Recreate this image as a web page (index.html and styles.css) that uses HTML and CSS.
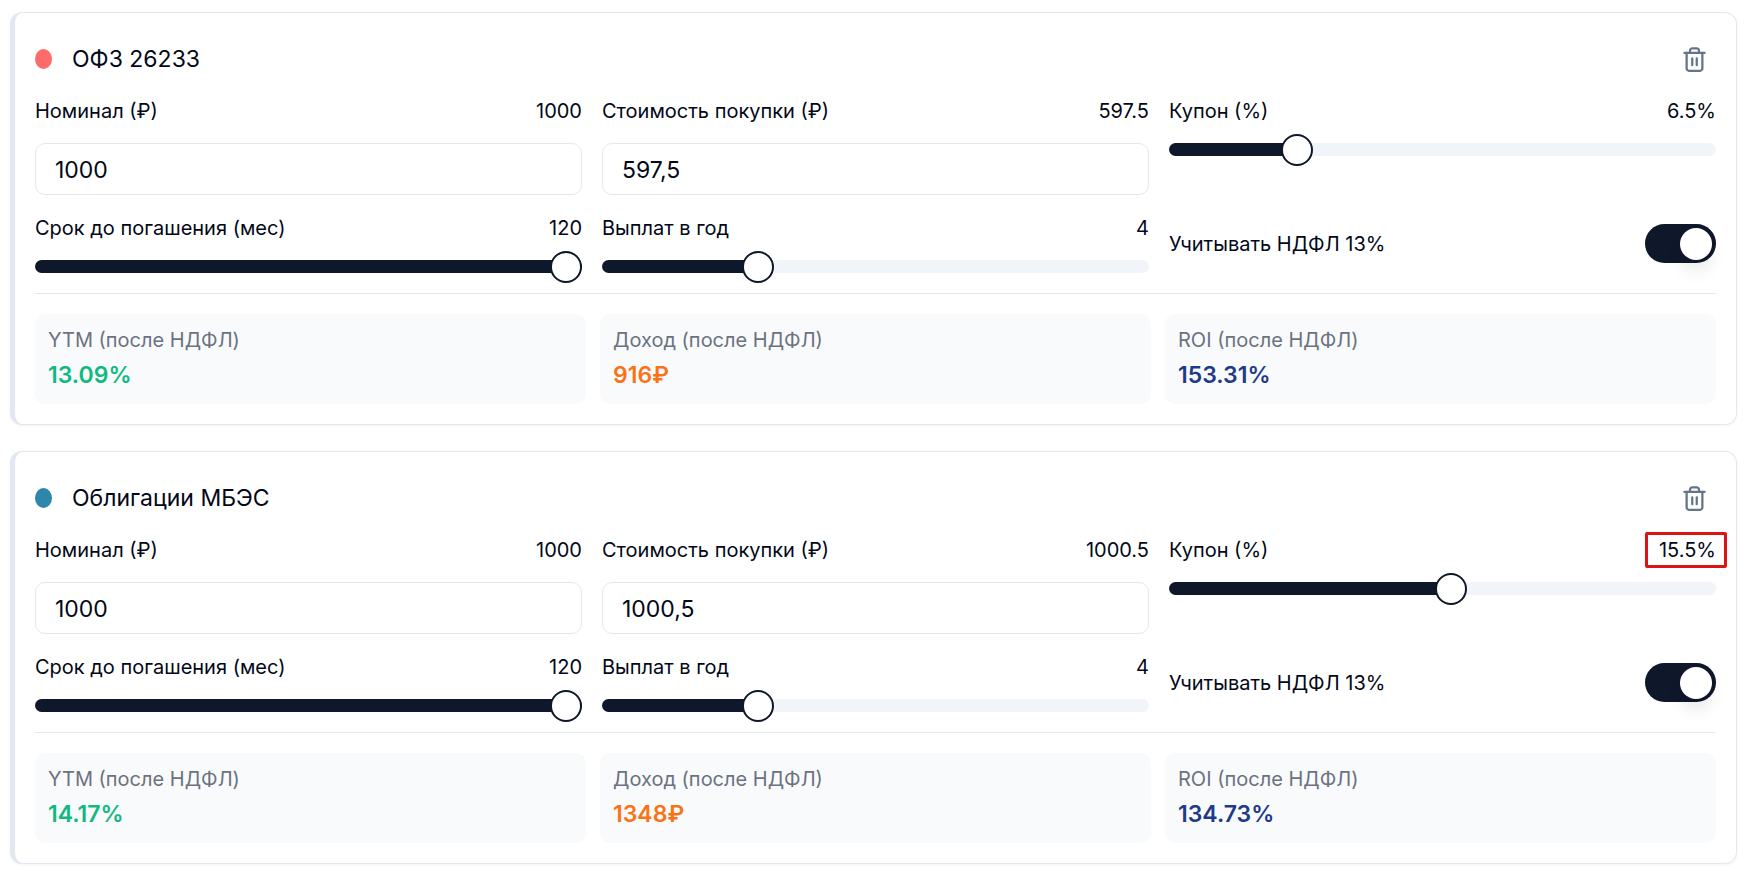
FILE: index.html
```
<!DOCTYPE html>
<html lang="ru">
<head>
  <meta charset="UTF-8">
  <title>Калькулятор облигаций</title>
  <link rel="stylesheet" href="styles.css">
</head>
<body>
  <main class="bonds">
    <section class="card">
      <header class="card-header">
        <span class="dot dot-red"></span>
        <h2>ОФЗ 26233</h2>
        <button type="button" class="delete" aria-label="Удалить">
          <svg viewBox="0 0 24 24" fill="none" stroke="currentColor" stroke-width="2" stroke-linecap="round" stroke-linejoin="round">
            <path d="M3 6h18"/>
            <path d="M19 6v14c0 1-1 2-2 2H7c-1 0-2-1-2-2V6"/>
            <path d="M8 6V4c0-1 1-2 2-2h4c1 0 2 1 2 2v2"/>
            <path d="M10 11v6"/>
            <path d="M14 11v6"/>
          </svg>
        </button>
      </header>

      <div class="fields">
        <div class="field">
          <div class="field-head">
            <label for="nominal1">Номинал (₽)</label>
            <output for="nominal1">1000</output>
          </div>
          <input type="text" inputmode="decimal" id="nominal1" value="1000">
        </div>
        <div class="field">
          <div class="field-head">
            <label for="price1">Стоимость покупки (₽)</label>
            <output for="price1">597.5</output>
          </div>
          <input type="text" inputmode="decimal" id="price1" value="597,5">
        </div>
        <div class="field">
          <div class="field-head">
            <label for="coupon1">Купон (%)</label>
            <output for="coupon1">6.5%</output>
          </div>
          <input type="range" id="coupon1" min="0" max="30" step="0.5" value="6.5" style="--fill: 21.67%">
        </div>
        <div class="field">
          <div class="field-head">
            <label for="term1">Срок до погашения (мес)</label>
            <output for="term1">120</output>
          </div>
          <input type="range" id="term1" min="1" max="120" value="120" style="--fill: 100%">
        </div>
        <div class="field">
          <div class="field-head">
            <label for="freq1">Выплат в год</label>
            <output for="freq1">4</output>
          </div>
          <input type="range" id="freq1" min="1" max="12" value="4" style="--fill: 27.27%">
        </div>
        <div class="switch-row">
          <label for="tax1">Учитывать НДФЛ 13%</label>
          <input type="checkbox" role="switch" class="switch" id="tax1" checked>
        </div>
      </div>

      <div class="results">
        <div class="result">
          <div class="result-label">YTM (после НДФЛ)</div>
          <div class="result-value green">13.09%</div>
        </div>
        <div class="result">
          <div class="result-label">Доход (после НДФЛ)</div>
          <div class="result-value orange">916₽</div>
        </div>
        <div class="result">
          <div class="result-label">ROI (после НДФЛ)</div>
          <div class="result-value blue">153.31%</div>
        </div>
      </div>
    </section>

    <section class="card">
      <header class="card-header">
        <span class="dot dot-blue"></span>
        <h2>Облигации МБЭС</h2>
        <button type="button" class="delete" aria-label="Удалить">
          <svg viewBox="0 0 24 24" fill="none" stroke="currentColor" stroke-width="2" stroke-linecap="round" stroke-linejoin="round">
            <path d="M3 6h18"/>
            <path d="M19 6v14c0 1-1 2-2 2H7c-1 0-2-1-2-2V6"/>
            <path d="M8 6V4c0-1 1-2 2-2h4c1 0 2 1 2 2v2"/>
            <path d="M10 11v6"/>
            <path d="M14 11v6"/>
          </svg>
        </button>
      </header>

      <div class="fields">
        <div class="field">
          <div class="field-head">
            <label for="nominal2">Номинал (₽)</label>
            <output for="nominal2">1000</output>
          </div>
          <input type="text" inputmode="decimal" id="nominal2" value="1000">
        </div>
        <div class="field">
          <div class="field-head">
            <label for="price2">Стоимость покупки (₽)</label>
            <output for="price2">1000.5</output>
          </div>
          <input type="text" inputmode="decimal" id="price2" value="1000,5">
        </div>
        <div class="field">
          <div class="field-head">
            <label for="coupon2">Купон (%)</label>
            <output for="coupon2" class="marked">15.5%</output>
          </div>
          <input type="range" id="coupon2" min="0" max="30" step="0.5" value="15.5" style="--fill: 51.67%">
        </div>
        <div class="field">
          <div class="field-head">
            <label for="term2">Срок до погашения (мес)</label>
            <output for="term2">120</output>
          </div>
          <input type="range" id="term2" min="1" max="120" value="120" style="--fill: 100%">
        </div>
        <div class="field">
          <div class="field-head">
            <label for="freq2">Выплат в год</label>
            <output for="freq2">4</output>
          </div>
          <input type="range" id="freq2" min="1" max="12" value="4" style="--fill: 27.27%">
        </div>
        <div class="switch-row">
          <label for="tax2">Учитывать НДФЛ 13%</label>
          <input type="checkbox" role="switch" class="switch" id="tax2" checked>
        </div>
      </div>

      <div class="results">
        <div class="result">
          <div class="result-label">YTM (после НДФЛ)</div>
          <div class="result-value green">14.17%</div>
        </div>
        <div class="result">
          <div class="result-label">Доход (после НДФЛ)</div>
          <div class="result-value orange">1348₽</div>
        </div>
        <div class="result">
          <div class="result-label">ROI (после НДФЛ)</div>
          <div class="result-value blue">134.73%</div>
        </div>
      </div>
    </section>
  </main>

  <script>
    // keep the filled part of a slider and its number in step with the thumb
    document.querySelectorAll('input[type="range"]').forEach((slider) => {
      slider.addEventListener('input', () => {
        const part = (slider.value - slider.min) / (slider.max - slider.min);
        slider.style.setProperty('--fill', part * 100 + '%');
        const output = document.querySelector('output[for="' + slider.id + '"]');
        output.textContent = slider.value + (slider.id.startsWith('coupon') ? '%' : '');
      });
    });
  </script>
</body>
</html>
```
FILE: styles.css
```
* {
  box-sizing: border-box;
}
body {
  margin: 0;
  background-color: #fff;
  color: #020817;
  font-family: Inter, "Liberation Sans", sans-serif;
  font-size: 20px;
  line-height: 28px;
}
.bonds {
  display: flex;
  flex-direction: column;
  gap: 26px;
  padding: 12px 9px 8px 10px;
}
.card {
  padding: 20px;
  border: 1px solid #e2e8f0;
  border-left-width: 5px;
  border-radius: 12px;
  background-color: #fff;
  box-shadow: 0 1px 3px rgba(0, 0, 0, 0.05);
}

/* header */
.card-header {
  display: flex;
  align-items: center;
  height: 52px;
  margin-bottom: 12px;
}
.dot {
  width: 17px;
  height: 20px;
  margin-right: 20px;
  border-radius: 50%;
}
.dot-red {
  background-color: #ff6b6b;
}
.dot-blue {
  background-color: #2e86ab;
}
h2 {
  flex: 1;
  margin: 0;
  font-size: 23px;
  font-weight: 400;
}
.delete {
  display: flex;
  align-items: center;
  justify-content: center;
  width: 44px;
  height: 44px;
  padding: 0;
  border: none;
  background: none;
  color: #64748b;
  cursor: pointer;
}
.delete svg {
  width: 27px;
  height: 27px;
}

/* fields */
.fields {
  display: grid;
  grid-template-columns: repeat(3, 1fr);
  gap: 19px 20px;
}
.field {
  display: flex;
  flex-direction: column;
  gap: 18px;
}
.field-head,
.switch-row {
  display: flex;
  align-items: center;
  justify-content: space-between;
}
input[type="text"] {
  width: 100%;
  height: 52px;
  padding: 2px 19px 0;
  border: 1px solid #e2e8f0;
  border-radius: 10px;
  background-color: #fff;
  color: inherit;
  font-family: inherit;
  font-size: 23px;
}
input[type="range"] {
  -webkit-appearance: none;
  appearance: none;
  width: 100%;
  height: 13px;
  margin: 0;
  border-radius: 7px;
  background: linear-gradient(#0f172a, #0f172a) no-repeat 0 0 / var(--fill) 100% #f1f5f9;
  cursor: pointer;
}
input[type="range"]::-webkit-slider-thumb {
  -webkit-appearance: none;
  width: 32px;
  height: 32px;
  border: 2px solid #0f172a;
  border-radius: 50%;
  background-color: #fff;
}
.switch {
  -webkit-appearance: none;
  appearance: none;
  display: flex;
  align-items: center;
  width: 71px;
  height: 39px;
  margin: 0;
  padding: 0 4px;
  border-radius: 20px;
  background-color: #e2e8f0;
  cursor: pointer;
}
.switch::before {
  content: "";
  width: 32px;
  height: 32px;
  border-radius: 50%;
  background-color: #fff;
  box-shadow: 0 12px 16px rgba(0, 0, 0, 0.08);
}
.switch:checked {
  justify-content: flex-end;
  background-color: #0f172a;
}
.marked {
  position: relative;
}
.marked::after {
  content: "";
  position: absolute;
  inset: -4px -11px -4px -14px;
  border: 3px solid #dc1414;
  border-radius: 2px;
}

/* results */
.results {
  display: grid;
  grid-template-columns: repeat(3, 1fr);
  gap: 14px;
  margin-top: 20px;
  padding-top: 20px;
  border-top: 1px solid #e2e8f0;
}
.result {
  display: flex;
  flex-direction: column;
  gap: 5px;
  padding: 12px 13px 13px;
  border-radius: 10px;
  background-color: #f9fafb;
}
.result-label {
  color: #6b7280;
}
.result-value {
  font-size: 23px;
  font-weight: 600;
  line-height: 32px;
}
.green {
  color: #10b981;
}
.orange {
  color: #f97316;
}
.blue {
  color: #1e3a8a;
}
```
